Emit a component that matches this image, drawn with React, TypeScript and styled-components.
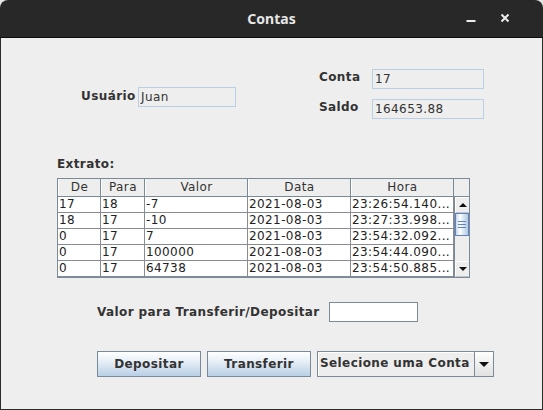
import React from 'react'
import styled, { createGlobalStyle } from 'styled-components'

const GlobalStyle = createGlobalStyle`
	html, body {
		margin: 0;
		padding: 0;
		background: #e8e8e8;
	}
	* {
		box-sizing: border-box;
	}
`

const rows = [
	['17', '18', '-7', '2021-08-03', '23:26:54.140...'],
	['18', '17', '-10', '2021-08-03', '23:27:33.998...'],
	['0', '17', '7', '2021-08-03', '23:54:32.092...'],
	['0', '17', '100000', '2021-08-03', '23:54:44.090...'],
	['0', '17', '64738', '2021-08-03', '23:54:50.885...'],
]

const columns = [
	{ title: 'De', width: 43 },
	{ title: 'Para', width: 44 },
	{ title: 'Valor', width: 103 },
	{ title: 'Data', width: 103 },
	{ title: 'Hora', width: 103 },
]

export default function App() {
	return (
		<>
			<GlobalStyle />
			<Window>
				<TitleBar>
					<span />
					<Title>Contas</Title>
					<Controls>
						<ControlButton aria-label="minimizar">
							<svg width="10" height="10" viewBox="0 0 10 10">
								<rect x="0.5" y="7" width="9" height="2" fill="#ededed" />
							</svg>
						</ControlButton>
						<ControlButton aria-label="fechar">
							<svg width="10" height="10" viewBox="0 0 10 10">
								<path d="M1.5 1.5 L8.5 8.5 M8.5 1.5 L1.5 8.5" stroke="#ededed" strokeWidth="2" />
							</svg>
						</ControlButton>
					</Controls>
				</TitleBar>

				<Content>
					<TopSection>
						<UserGroup>
							<UserLabel>Usuário</UserLabel>
							<ReadOnlyField $width={98}>Juan</ReadOnlyField>
						</UserGroup>
						<AccountGroup>
							<SideLabel>Conta</SideLabel>
							<ReadOnlyField $width={112}>17</ReadOnlyField>
							<SideLabel>Saldo</SideLabel>
							<ReadOnlyField $width={112}>164653.88</ReadOnlyField>
						</AccountGroup>
					</TopSection>

					<ExtratoLabel>Extrato:</ExtratoLabel>

					<ScrollPane>
						<HeaderRow>
							{columns.map((c) => (
								<HeaderCell key={c.title} style={{ width: c.width }}>
									{c.title}
								</HeaderCell>
							))}
						</HeaderRow>
						<HeaderCorner />
						<Body>
							{rows.map((r, i) => (
								<Row key={i}>
									{r.map((v, j) => (
										<Cell key={j} style={{ width: columns[j].width }}>
											{v}
										</Cell>
									))}
								</Row>
							))}
						</Body>
						<ScrollBar>
							<ArrowButton>
								<Triangle $dir="up" />
							</ArrowButton>
							<Thumb>
								<Grip />
								<Grip />
								<Grip />
							</Thumb>
							<Track />
							<ArrowButton>
								<Triangle $dir="down" />
							</ArrowButton>
						</ScrollBar>
					</ScrollPane>

					<AmountRow>
						<Label>Valor para Transferir/Depositar</Label>
						<InputField />
					</AmountRow>

					<ActionRow>
						<Button>Depositar</Button>
						<Button>Transferir</Button>
						<Combo>
							<ComboText>Selecione uma Conta</ComboText>
							<ComboArrow>
								<Triangle $dir="down" $size={5} />
							</ComboArrow>
						</Combo>
					</ActionRow>
				</Content>
			</Window>
		</>
	)
}

const Window = styled.div`
	width: 543px;
	height: 410px;
	display: flex;
	flex-direction: column;
	border-radius: 8px 8px 0 0;
	overflow: hidden;
	background: #eeeeee;
	font-family: 'DejaVu Sans', 'Liberation Sans', sans-serif;
	font-size: 12px;
	letter-spacing: 0.4px;
	color: #333333;
`

const TitleBar = styled.div`
	height: 38px;
	flex: none;
	display: grid;
	grid-template-columns: 1fr auto 1fr;
	align-items: center;
	background: #282828;
	border-bottom: 1px solid #0c0c0c;
	padding-bottom: 1px;
`

const Title = styled.div`
	font-family: 'Noto Sans', 'DejaVu Sans', sans-serif;
	font-weight: 700;
	font-size: 14px;
	letter-spacing: 0;
	color: #e6e6e6;
`

const Controls = styled.div`
	display: flex;
	justify-content: flex-end;
	padding-right: 21px;
`

const ControlButton = styled.div`
	width: 34px;
	height: 36px;
	display: flex;
	align-items: center;
	justify-content: center;
`

const Content = styled.div`
	flex: 1;
	display: flex;
	flex-direction: column;
	border-left: 1px solid #2c2c2c;
	border-right: 1px solid #2c2c2c;
	border-bottom: 1px solid #2c2c2c;
`

const TopSection = styled.div`
	display: flex;
	align-items: flex-start;
	padding: 31px 0 0 80px;
`

const UserGroup = styled.div`
	width: 238px;
	margin-top: 18px;
	display: flex;
	align-items: center;
`

const Label = styled.span`
	font-weight: 700;
	font-size: 12px;
	color: #333333;
	white-space: nowrap;
`

const UserLabel = styled(Label)`
	width: 57px;
	padding-bottom: 2px;
`

const AccountGroup = styled.div`
	display: grid;
	grid-template-columns: 53px auto;
	row-gap: 10px;
	align-items: center;
`

const SideLabel = styled(Label)`
	padding-bottom: 4px;
`

const ReadOnlyField = styled.div<{ $width: number }>`
	width: ${(p) => p.$width}px;
	height: 20px;
	border: 1px solid #b8cfe5;
	background: #eeeeee;
	padding-left: 2px;
	line-height: 18px;
	font-size: 12px;
	color: #333333;
`

const ExtratoLabel = styled(Label)`
	display: block;
	margin: 38px 0 0 56px;
	line-height: 14px;
`

const ScrollPane = styled.div`
	margin: 7px 0 0 56px;
	width: 413px;
	display: grid;
	grid-template-columns: 396px 15px;
	grid-template-rows: 18px 80px;
	border: 1px solid #7a8a99;
	background: #ffffff;
`

const HeaderRow = styled.div`
	display: flex;
	background: #eeeeee;
	border-bottom: 1px solid #7a8a99;
`

const HeaderCell = styled.div`
	flex: none;
	height: 17px;
	line-height: 16px;
	text-align: center;
	border-right: 1px solid #7a8a99;
	border-left: 1px solid #ffffff;
	font-size: 12px;
	color: #333333;
`

const HeaderCorner = styled.div`
	background: #eeeeee;
	border-bottom: 1px solid #7a8a99;
`

const Body = styled.div`
	overflow: hidden;
	background: #ffffff;
`

const Row = styled.div`
	display: flex;
	height: 16px;
`

const Cell = styled.div`
	flex: none;
	height: 16px;
	line-height: 15px;
	padding-left: 1px;
	border-right: 1px solid #858c94;
	border-bottom: 1px solid #858c94;
	font-size: 12px;
	color: #222222;
	white-space: nowrap;
	overflow: hidden;
`

const ScrollBar = styled.div`
	display: flex;
	flex-direction: column;
	background: #eeeeee;
	border-left: 1px solid #7a8a99;
`

const ArrowButton = styled.div`
	flex: none;
	height: 16px;
	display: flex;
	align-items: center;
	justify-content: center;
	background: #eeeeee;
	border-top: 1px solid #ffffff;
	border-left: 1px solid #ffffff;
	border-bottom: 1px solid #c4c4c4;
`

const Triangle = styled.span<{ $dir: 'up' | 'down'; $size?: number }>`
	width: 0;
	height: 0;
	border-left: ${(p) => p.$size ?? 4}px solid transparent;
	border-right: ${(p) => p.$size ?? 4}px solid transparent;
	${(p) => (p.$dir === 'up' ? 'border-bottom' : 'border-top')}: ${(p) => p.$size ?? 4}px solid #111;
`

const Thumb = styled.div`
	flex: none;
	height: 23px;
	display: flex;
	flex-direction: column;
	align-items: center;
	justify-content: center;
	gap: 2px;
	border: 1px solid #6382bf;
	background: linear-gradient(to right, #c4d8ee 0%, #ffffff 35%, #dde8f3 60%, #b0c9e3 100%);
`

const Grip = styled.span`
	width: 8px;
	height: 1px;
	background: #6382bf;
`

const Track = styled.div`
	flex: 1;
	background: #eeeeee;
`

const AmountRow = styled.div`
	display: flex;
	align-items: center;
	gap: 9px;
	margin: 24px 0 0 96px;
`

const InputField = styled.div`
	width: 89px;
	height: 20px;
	background: #ffffff;
	border: 1px solid #7a8a99;
	box-shadow: inset 1px 1px 0 #ffffff;
`

const ActionRow = styled.div`
	display: flex;
	gap: 6px;
	margin: 29px 0 0 96px;
`

const Button = styled.div`
	width: 104px;
	height: 26px;
	display: flex;
	align-items: center;
	justify-content: center;
	border: 1px solid #7a8a99;
	background: linear-gradient(to bottom, #ffffff 0%, #eaf1f8 35%, #dbe6f2 55%, #b8cfe5 100%);
	font-weight: 700;
	font-size: 12px;
	color: #333333;
`

const Combo = styled.div`
	width: 177px;
	height: 26px;
	display: flex;
	border: 1px solid #7a8a99;
	background: #eeeeee;
`

const ComboText = styled.div`
	flex: 1;
	padding: 0 0 3px 1px;
	display: flex;
	align-items: center;
	font-weight: 700;
	font-size: 12px;
	color: #333333;
	border-top: 1px solid #ffffff;
	border-left: 1px solid #ffffff;
	white-space: nowrap;
	overflow: hidden;
`

const ComboArrow = styled.div`
	width: 19px;
	display: flex;
	align-items: center;
	justify-content: center;
	border-left: 1px solid #7a8a99;
	background: linear-gradient(to bottom, #ffffff 0%, #eeeeee 50%, #e2e2e2 100%);
`
